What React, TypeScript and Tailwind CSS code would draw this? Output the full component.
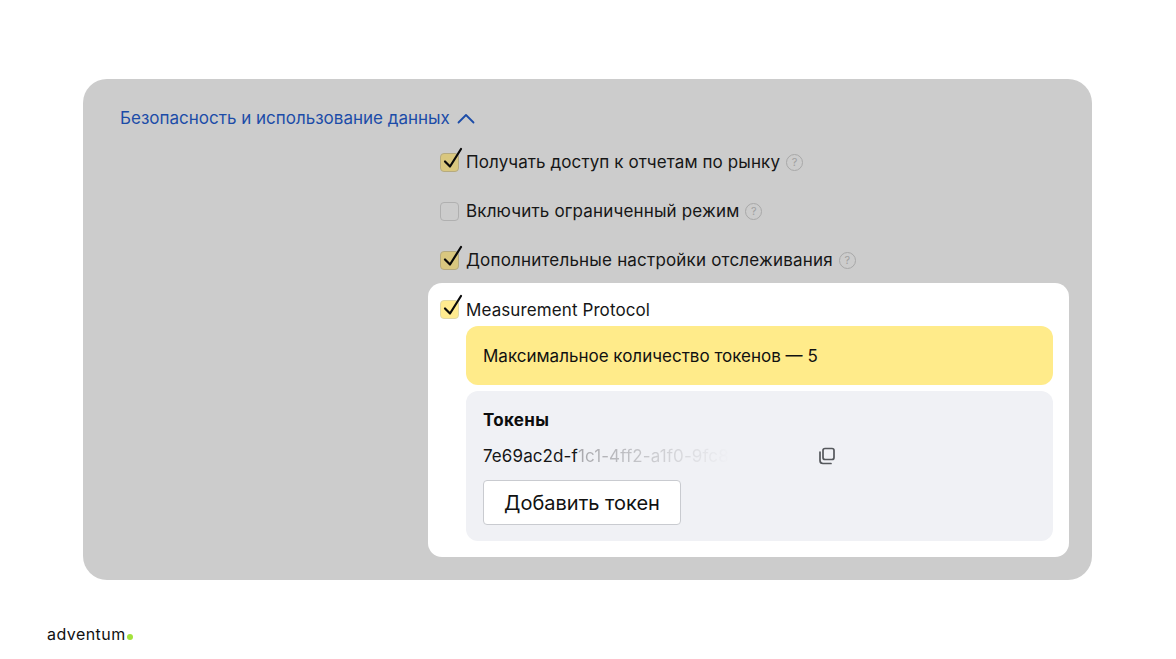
const FONT = "font-['Inter','Noto_Sans',sans-serif]";

function Tick() {
  return (
    <svg
      className="absolute left-[2px] top-[-8px] w-[22px] h-[24px]"
      viewBox="0 0 22 24"
      fill="none"
    >
      <path
        d="M2 15.5 L7 20.5 L18 3"
        stroke="#0a0a0a"
        strokeWidth="2.2"
        strokeLinecap="round"
        strokeLinejoin="round"
      />
    </svg>
  );
}

function Hint() {
  return (
    <span className="w-[17px] h-[17px] rounded-full border-[1.5px] border-[#a8a8a8] text-[#a0a0a0] text-[11px] leading-none flex items-center justify-center shrink-0">
      ?
    </span>
  );
}

function OptionRow({
  label,
  checked,
  box,
  spacing,
}: {
  label: string;
  checked?: boolean;
  box: string;
  spacing: string;
}) {
  return (
    <div className="flex items-center h-[24px]">
      <span className={`relative w-[19px] h-[19px] rounded-[4px] border shrink-0 ${box}`}>
        {checked && <Tick />}
      </span>
      <span className={`ml-[7px] mt-[2px] text-[17px] text-[#161616] whitespace-nowrap ${spacing}`}>{label}</span>
      <span className="ml-[6px]">
        <Hint />
      </span>
    </div>
  );
}

export default function App() {
  return (
    <div className={`h-[659px] w-full bg-white flex flex-col ${FONT}`}>
      <div className="mt-[79px] ml-[83px] w-[1009px] h-[501px] rounded-[24px] bg-[#cccccc] flex flex-col">
        <div className="mt-[27px] ml-[37px] h-[24px] flex items-center">
          <span className="mt-[2px] text-[17px] text-[#1c4ca8] whitespace-nowrap">
            Безопасность и использование данных
          </span>
          <svg className="ml-[7px] mt-[1px] w-[18px] h-[11px]" viewBox="0 0 18 11" fill="none">
            <path d="M1.5 9.5 L9 2 L16.5 9.5" stroke="#1c4ca8" strokeWidth="1.8" strokeLinecap="round" strokeLinejoin="round" />
          </svg>
        </div>

        <div className="ml-[357px] mt-[20px] flex flex-col gap-[25px]">
          <OptionRow label="Получать доступ к отчетам по рынку" checked box="bg-[#d9c77f] border-[#b5aa80]" spacing="tracking-[0.1px]" />
          <OptionRow label="Включить ограниченный режим" box="bg-[#cccccc] border-[#b0b0b0]" spacing="tracking-[0.16px]" />
          <OptionRow label="Дополнительные настройки отслеживания" checked box="bg-[#d9c77f] border-[#b5aa80]" spacing="tracking-[0.19px]" />
        </div>

        <div className="ml-[345px] mt-[11px] w-[641px] h-[274px] rounded-[14px] bg-white pl-[12px] pr-[16px] pt-[14px] flex flex-col">
          <div className="flex items-center h-[24px]">
            <span className="relative w-[19px] h-[19px] rounded-[4px] border border-[#e0d9a8] bg-[#ffeb8f] shrink-0">
              <Tick />
            </span>
            <span className="ml-[7px] mt-[3px] text-[17px] tracking-[0.1px] text-[#161616] whitespace-nowrap">
              Measurement Protocol
            </span>
          </div>

          <div className="ml-[26px] mt-[5px] h-[59px] rounded-[12px] bg-[#ffeb8a] flex items-center pl-[17px] pt-[2px] text-[17px] text-[#111111]">
            Максимальное количество токенов — 5
          </div>

          <div className="ml-[26px] mt-[6px] h-[150px] rounded-[12px] bg-[#f0f1f5] pl-[17px] pt-[18px] flex flex-col">
            <div className="text-[17px] leading-[22px] font-bold tracking-[0.3px] text-[#0d0d0d]">Токены</div>
            <div className="mt-[14px] flex items-center h-[22px] w-[354px]">
              <span className="mt-[2px] text-[17px] tracking-[0.1px] text-[#161616] whitespace-nowrap">7e69ac2d-f</span>
              <span className="mt-[2px] text-[17px] tracking-[0.1px] whitespace-nowrap text-transparent bg-clip-text bg-gradient-to-r from-[#a8a8ac] to-[#eff0f4]">
                1c1-4ff2-a1f0-9fc8
              </span>
              <svg
                className="ml-auto w-[20px] h-[20px] text-[#55585c]"
                viewBox="0 0 20 20"
                fill="none"
                stroke="currentColor"
                strokeWidth="1.7"
              >
                <rect x="6" y="2.5" width="11" height="11" rx="2" />
                <path d="M3 6v8.5A3 3 0 0 0 6 17.5h8" strokeLinecap="round" />
              </svg>
            </div>
            <button className="mt-[13px] w-[198px] h-[45px] rounded-[4px] border border-[#c9cbd0] bg-white text-[20px] text-[#111111] flex items-center justify-center">
              Добавить токен
            </button>
          </div>
        </div>
      </div>

      <div className="ml-[47px] mt-[41px] h-[26px] flex items-center">
        <span className="text-[16px] tracking-[0.45px] leading-none text-[#111111]">adventum</span>
        <span className="ml-[1px] mt-[5px] w-[6px] h-[6px] rounded-full bg-[#a4e23c]" />
      </div>
    </div>
  );
}
